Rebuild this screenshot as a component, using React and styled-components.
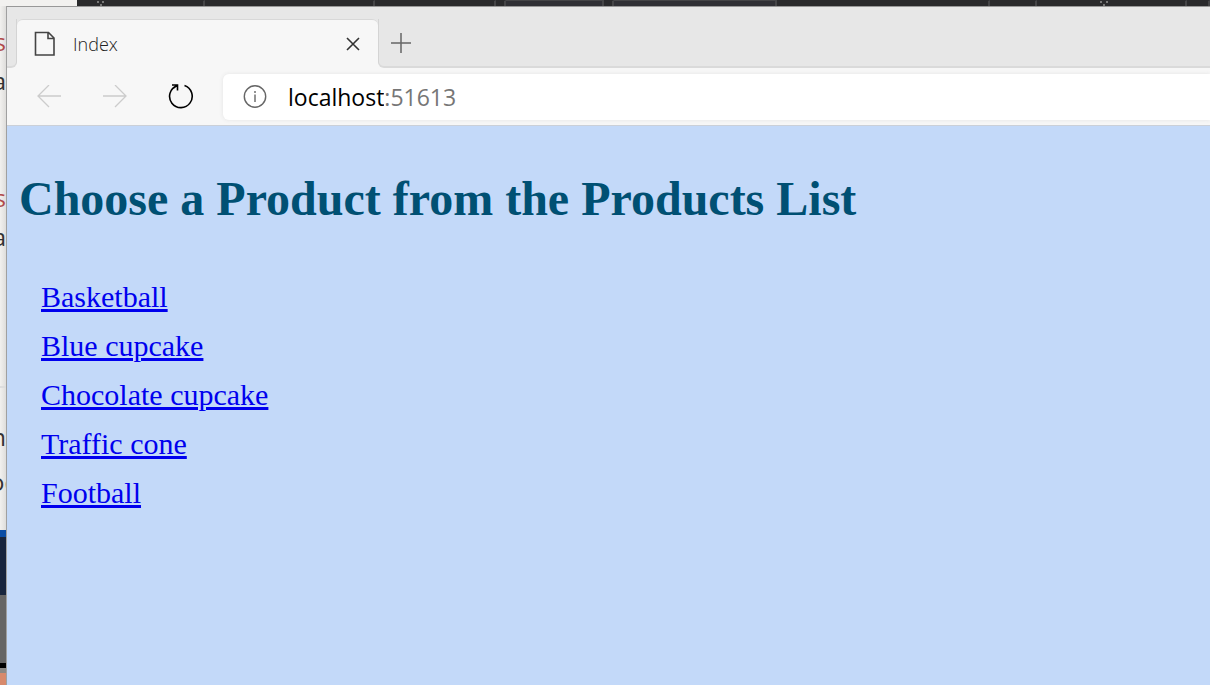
import React from 'react';
import styled, { createGlobalStyle } from 'styled-components';

const GlobalStyle = createGlobalStyle`
  *, *::before, *::after { box-sizing: border-box; }
  body { margin: 0; font-family: "Open Sans", "Noto Sans", sans-serif; }
`;

const Desktop = styled.div`
  display: grid;
  grid-template: 6px 1fr / 6px minmax(0, 1fr);
  min-height: 100vh;
  background: #f2f1ef;
`;

const Editor = styled.div`
  grid-column: 1 / -1;
  display: flex;
  overflow: hidden;
  margin-left: 77px;
  background: #2a2a2c;
`;

const Pane = styled.div`
  flex: ${(p) => (p.$grow ? '1' : `0 0 ${p.$width}px`)};
  display: flex;
  align-items: flex-start;
  padding-left: ${(p) => p.$inset || 0}px;
  border-right: 2px solid #454547;
  background: ${(p) => (p.$raised ? '#303035' : 'transparent')};
  border-top: 1px solid ${(p) => (p.$raised ? '#454547' : 'transparent')};
`;

const Document = styled.div`
  display: flex;
  flex-direction: column;
  overflow: hidden;
  width: 6px;
  background: linear-gradient(to right, #f2f1ef, #dedddb);
`;

const Fragment = styled.span`
  display: flex;
  flex: none;
  justify-content: ${(p) => (p.$centered ? 'center' : 'flex-end')};
  height: ${(p) => p.$height}px;
  font-size: 24px;
  line-height: 40px;
  color: ${(p) => (p.$accent ? '#b04a4a' : '#333333')};
`;

const Block = styled.div`
  flex: ${(p) => (p.$height ? `0 0 ${p.$height}px` : '1')};
  background: ${(p) => p.$color};
`;

const Window = styled.div`
  display: flex;
  flex-direction: column;
  border-top: 1px solid #989898;
  border-left: 1px solid #a0a0a0;
  background: #c3d9f9;
`;

const TabStrip = styled.div`
  display: flex;
  height: 61px;
  padding-top: 12px;
  background: #e7e7e7;
`;

const Gutter = styled.div`
  flex: ${(p) => (p.$grow ? '1' : '0 0 10px')};
  display: flex;
  background: linear-gradient(#e7e7e7 50%, #f7f7f7 50%);
`;

const GutterFill = styled.div`
  flex: 1;
  display: flex;
  align-items: center;
  padding-left: ${(p) => (p.$side === 'right' ? 10 : 0)}px;
  border-bottom: 2px solid #dadada;
  border-${(p) => (p.$side === 'right' ? 'left' : 'right')}: 1px solid #d4d4d4;
  border-bottom-${(p) => (p.$side === 'right' ? 'left' : 'right')}-radius: 6px;
  background: #e7e7e7;
`;

const Tab = styled.div`
  display: flex;
  align-items: center;
  width: 361px;
  padding: 0 13px 0 17px;
  border-top: 1px solid #d8d8d8;
  border-radius: 6px 6px 0 0;
  background: #f7f7f7;
`;

const TabTitle = styled.span`
  flex: 1;
  padding-left: 17px;
  font-size: 18px;
  font-weight: 300;
  line-height: 24px;
  color: #222222;
`;

const IconButton = styled.button`
  display: flex;
  align-items: center;
  justify-content: center;
  flex: none;
  width: ${(p) => p.$size}px;
  height: ${(p) => p.$size}px;
  padding: 0;
  border: 0;
  background: transparent;
  color: ${(p) => p.$color};
`;

const Icon = styled.svg`
  display: block;
  flex: none;
  fill: none;
  stroke: currentColor;
`;

const Toolbar = styled.div`
  display: flex;
  align-items: center;
  height: 58px;
  padding-left: 22px;
  border-bottom: 1px solid #cbd0d8;
  background: #f7f7f7;
`;

const NavButtons = styled.nav`
  display: flex;
  gap: 26px;
  margin-right: 22px;
`;

const AddressBar = styled.label`
  flex: 1;
  display: flex;
  align-items: center;
  height: 46px;
  padding-left: 20px;
  border-radius: 6px 0 0 6px;
  background: #ffffff;
  box-shadow: 0 0 4px #e4e4e4;
  color: #666666;
  font-size: 23px;
  line-height: 32px;
`;

const HostInput = styled.input`
  field-sizing: content;
  margin-left: 21px;
  padding: 0;
  border: 0;
  outline: 0;
  background: transparent;
  color: #000000;
  font: inherit;
`;

const Port = styled.span`
  color: #767676;
`;

const Page = styled.main`
  flex: 1;
  padding: 43px 12px;
  font-family: "Liberation Serif", "Times New Roman", serif;
`;

const Heading = styled.h1`
  margin: 0 0 43px;
  font-size: 48px;
  line-height: 60px;
  color: #005073;
`;

const ProductList = styled.ul`
  margin: 0;
  padding: 0 0 0 22px;
  list-style: none;
`;

const Product = styled.li`
  font-size: 30px;
  line-height: 49px;
`;

const ProductLink = styled.a`
  color: #0000ee;
  text-decoration: underline;
  text-decoration-thickness: 3px;
`;

const products = ['Basketball', 'Blue cupcake', 'Chocolate cupcake', 'Traffic cone', 'Football'];

export default function App() {
  return (
    <Desktop>
      <GlobalStyle />
      <Editor>
        <Pane $width={128} $inset={19}>
          <Icon width="10" height="5" viewBox="0 0 10 5">
            <path d="M1 0h2v2H1zM6 0h2v2H6zM4 3h2v2H4z" fill="#777" stroke="none" />
          </Icon>
        </Pane>
        <Pane $width={170} />
        <Pane $width={121} />
        <Pane $width={10} />
        <Pane $width={98} $raised />
        <Pane $width={10} />
        <Pane $width={163} $raised />
        <Pane $width={213} />
        <Pane $width={47} />
        <Pane $width={150} $inset={62}>
          <Icon width="10" height="5" viewBox="0 0 10 5">
            <path d="M1 0h2v2H1zM7 0h2v2H7zM4 3h2v2H4z" fill="#777" stroke="none" />
          </Icon>
        </Pane>
        <Pane $grow />
      </Editor>
      <Document aria-hidden="true">
        <Block $height={16} $color="transparent" />
        <Fragment $accent $height={39}>s</Fragment>
        <Fragment $height={117}>a</Fragment>
        <Fragment $accent $height={39}>s</Fragment>
        <Fragment $height={169}>a</Fragment>
        <Block $height={2} $color="#dddddd" />
        <Block $height={29} $color="transparent" />
        <Fragment $height={45}>n</Fragment>
        <Fragment $centered $height={68}>oc</Fragment>
        <Block $height={7} $color="#0b4da5" />
        <Block $height={58} $color="#18253d" />
        <Block $height={68} $color="#666564" />
        <Block $height={5} $color="#000000" />
        <Block $height={5} $color="#8b8985" />
        <Block $color="#d88a6c" />
      </Document>
      <Window>
        <TabStrip>
          <Gutter><GutterFill $side="left" /></Gutter>
          <Tab>
            <Icon width="22" height="26" viewBox="0 0 22 26" strokeWidth="1.6" color="#444444">
              <path d="M1.5 1.5h13l5.500 5.500v17h-18.500zM14 1.500v6h6" />
            </Icon>
            <TabTitle>Index</TabTitle>
            <IconButton $size={24} $color="#333333" aria-label="Close tab">
              <Icon width="14" height="14" viewBox="0 0 14 14" strokeWidth="1.6">
                <path d="M1 1l12 12M13 1L1 13" />
              </Icon>
            </IconButton>
          </Tab>
          <Gutter $grow>
            <GutterFill $side="right">
              <IconButton $size={24} $color="#666666" aria-label="New tab">
                <Icon width="20" height="20" viewBox="0 0 20 20" strokeWidth="1.5">
                  <path d="M10 0v20M0 10h20" />
                </Icon>
              </IconButton>
            </GutterFill>
          </Gutter>
        </TabStrip>
        <Toolbar>
          <NavButtons aria-label="History">
            <IconButton $size={40} $color="#cccccc" aria-label="Back">
              <Icon width="26" height="24" viewBox="0 0 26 24" strokeWidth="1.3">
                <path d="M25 11H2M13 0L2 11l11 11" />
              </Icon>
            </IconButton>
            <IconButton $size={40} $color="#cccccc" aria-label="Forward">
              <Icon width="26" height="24" viewBox="0 0 26 24" strokeWidth="1.3">
                <path d="M1 11h23M13 0l11 11-11 11" />
              </Icon>
            </IconButton>
            <IconButton $size={40} $color="#000000" aria-label="Refresh">
              <Icon width="26" height="26" viewBox="0 0 26 26" strokeWidth="1.6">
                <path d="M16.500 1.600A11.300 11.300 0 1 1 9 1.700M4 1h5.500v5.500M9.500 1L5.500 4" />
              </Icon>
            </IconButton>
          </NavButtons>
          <AddressBar>
            <Icon width="24" height="24" viewBox="0 0 24 24" strokeWidth="1.4">
              <circle cx="12" cy="11.500" r="10.700" />
              <path d="M12 9.500v7.500M12 6v2" />
            </Icon>
            <HostInput aria-label="Address" defaultValue="localhost" />
            <Port>:51613</Port>
          </AddressBar>
        </Toolbar>
        <Page>
          <Heading>Choose a Product from the Products List</Heading>
          <ProductList>
            {products.map((name) => (
              <Product key={name}>
                <ProductLink href="#">{name}</ProductLink>
              </Product>
            ))}
          </ProductList>
        </Page>
      </Window>
    </Desktop>
  );
}
